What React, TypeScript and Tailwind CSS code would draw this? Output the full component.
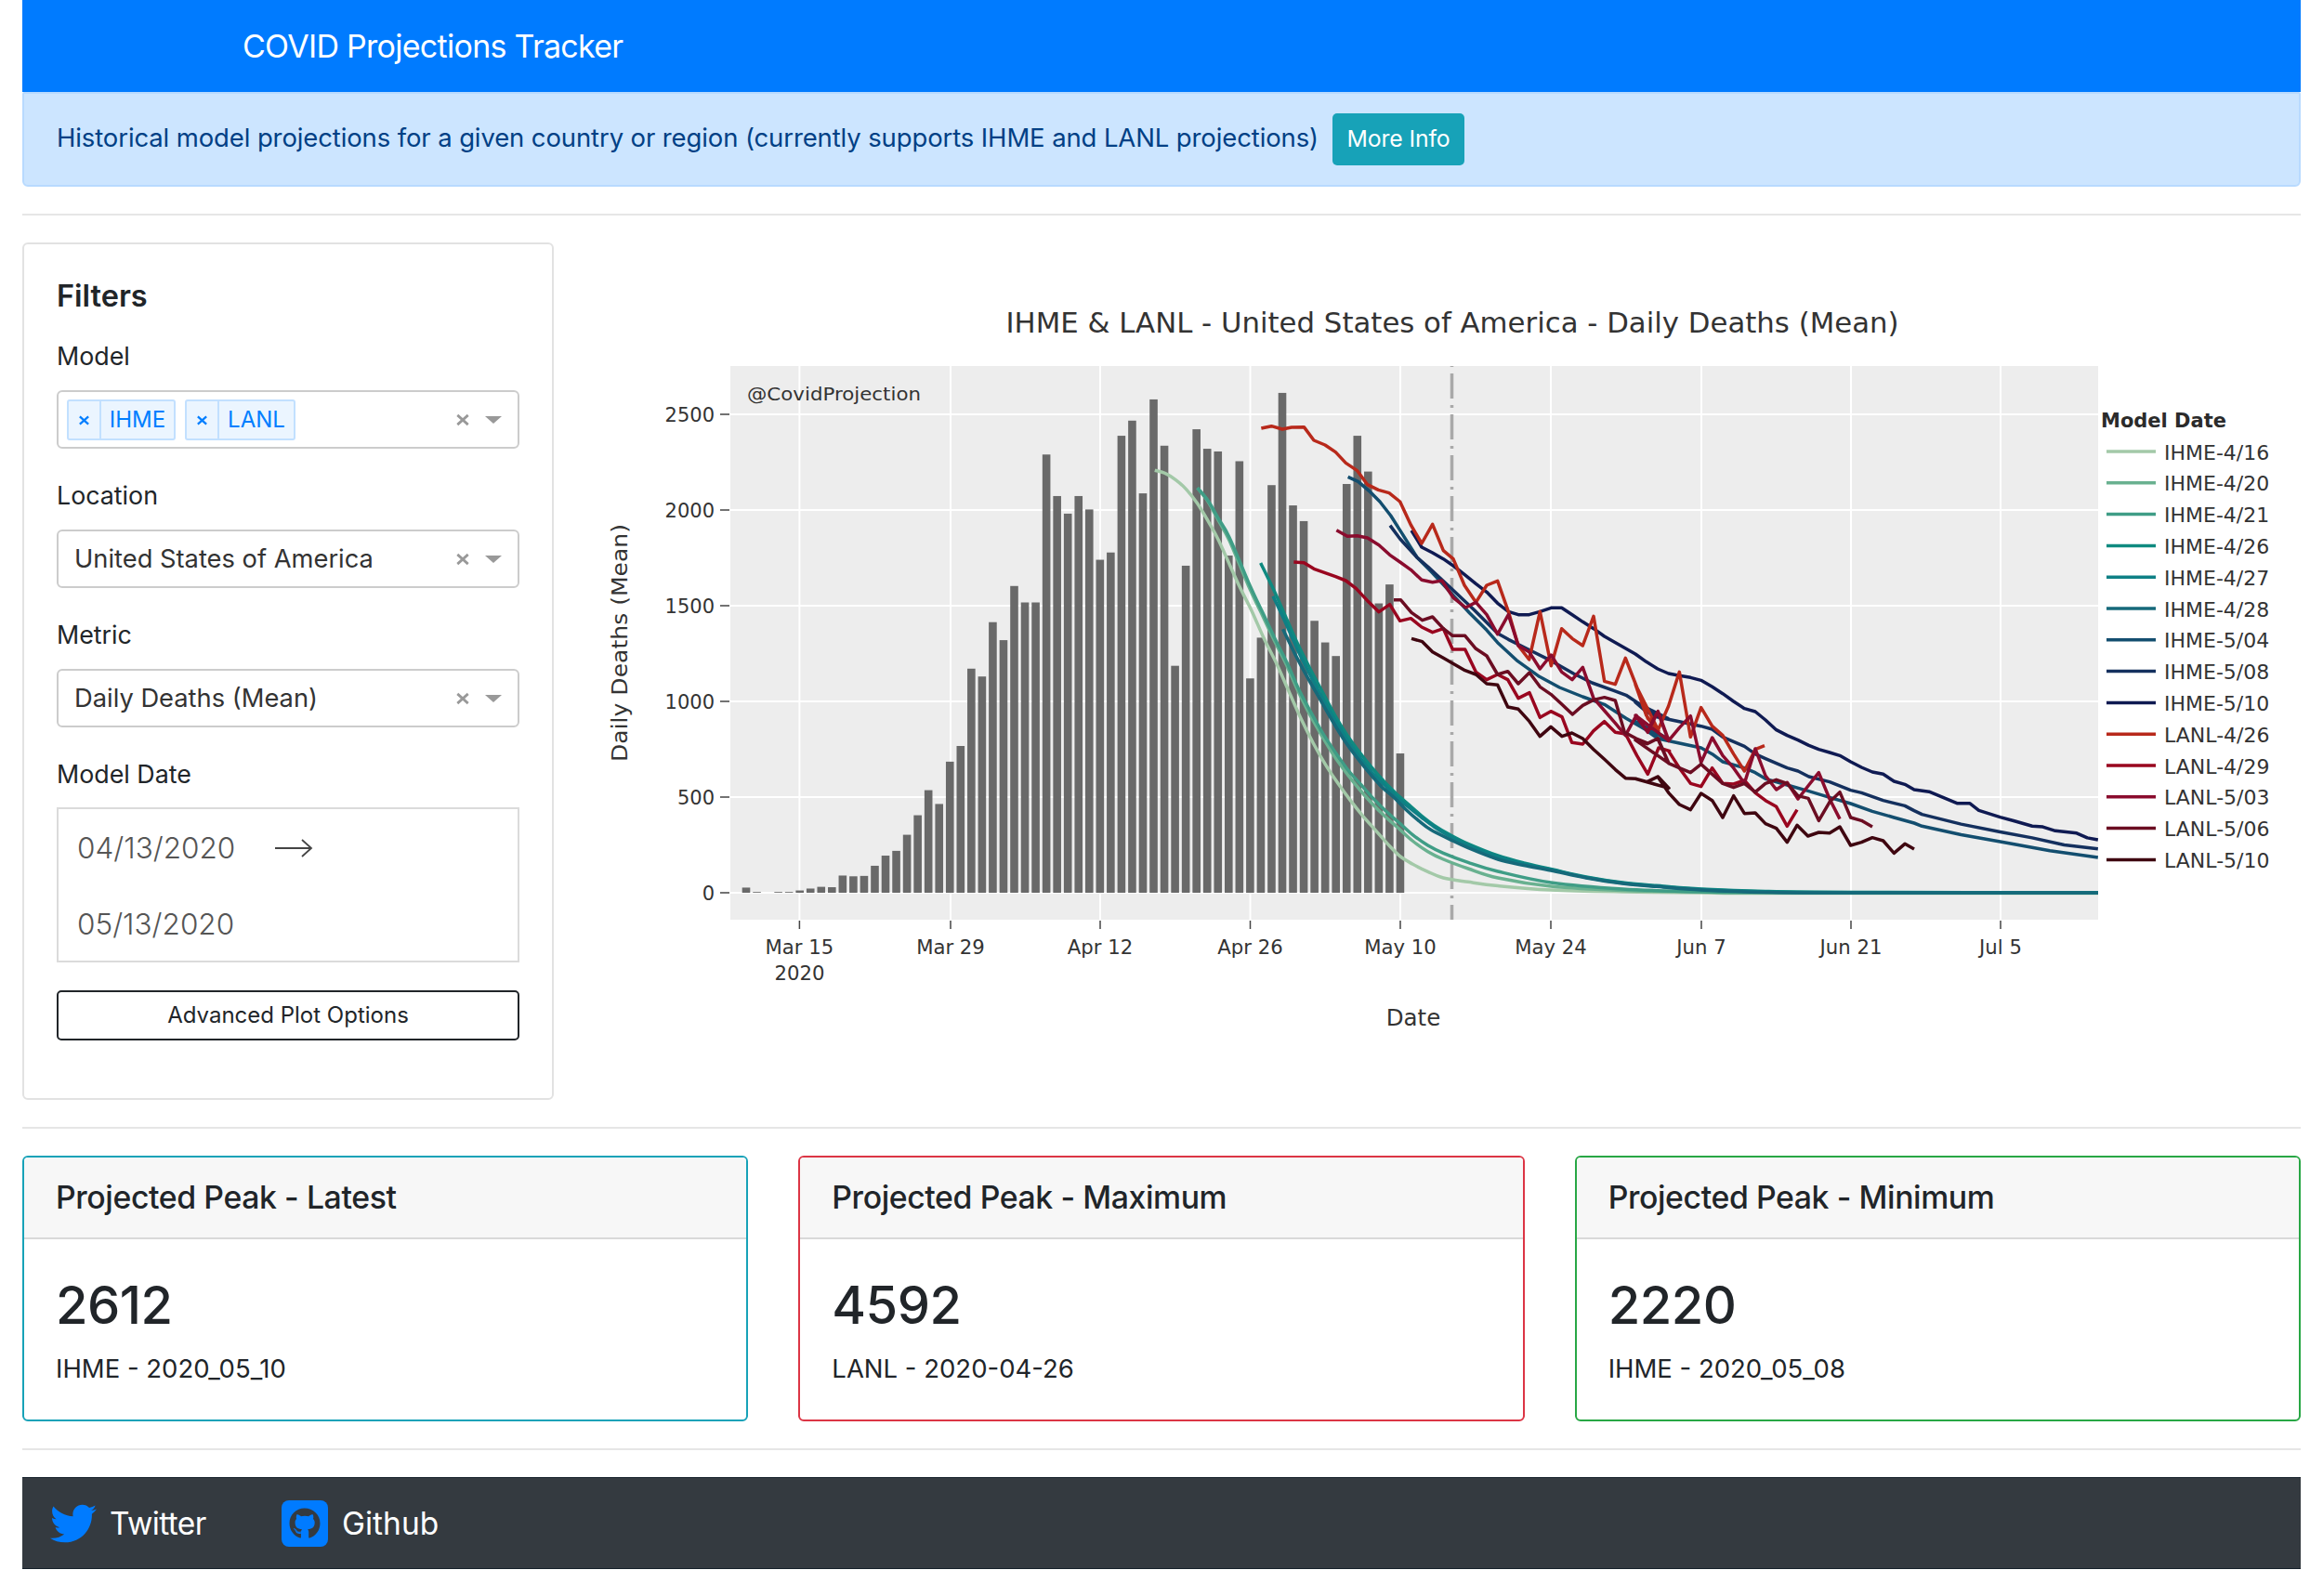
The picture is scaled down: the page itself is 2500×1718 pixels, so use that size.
import React from "react";
import { FaTwitter, FaGithub } from "react-icons/fa";

type P = number[][];
const mk = (ox: number, oy: number, sx: number, sy: number) => (a: P): P => a.map(([x, y]) => [ox + x / sx, oy + y / sy]);
const z3 = mk(640, 380, 1.742, 2.376);
const z5 = mk(1900, 380, 2.613, 2.376);
const z7 = mk(1340, 400, 3, 3);
const z8 = mk(1500, 600, 3, 3);
const z9 = mk(1760, 680, 3, 3);
const z10 = mk(1220, 600, 3, 3);

const bars = [27,4,0,4,4,12,22,31,29,90,86,88,141,194,219,303,405,536,464,685,767,1171,1130,1414,1320,1603,1517,1517,2290,2073,1981,2073,2003,1740,1778,2388,2467,2087,2578,2336,1186,1709,2422,2320,2306,1762,2255,1120,1333,2130,2612,2024,1942,1421,1308,1237,2136,2388,2201,1512,1611,728];

const series: { name: string; color: string; smooth?: boolean; pts: P }[] = [
  { name: "IHME-4/16", color: "#a3c9a8", smooth: true, pts: [...z3([[1050,300],[1070,308],[1090,325],[1110,350],[1130,385],[1150,430],[1170,480]]), ...z10([[340,90],[380,170],[420,260],[460,340],[500,430],[540,520],[580,600],[620,670],[660,730],[700,785],[740,835],[780,880],[820,925],[860,965],[900,990],[950,1015],[1000,1035],[1080,1048]]), [1612,953.5],[1669,958],[1746,960],[1831,961],[1900,961.5],[2258,961.5]] },
  { name: "IHME-4/20", color: "#69b190", smooth: true, pts: [...z3([[1130,345],[1150,380],[1170,430],[1190,480]]), ...z10([[370,90],[410,175],[450,260],[490,340],[530,430],[570,510],[610,580],[650,645],[690,700],[730,750],[770,795],[810,835],[850,870],[900,915],[950,950],[1000,975],[1080,1005]]), [1612,945],[1669,954],[1746,958.5],[1831,960],[1900,961],[2258,961]] },
  { name: "IHME-4/21", color: "#3f9d86", smooth: true, pts: [...z3([[1130,345],[1150,378],[1170,425],[1190,472]]), ...z10([[375,90],[415,175],[455,260],[495,340],[535,430],[575,505],[615,575],[655,635],[695,690],[735,735],[775,780],[815,820],[855,855],[900,895],[950,930],[1000,955],[1080,985]]), [1612,938],[1669,950],[1746,957],[1831,960],[1900,960.5],[2258,961]] },
  { name: "IHME-4/26", color: "#0f8a80", smooth: true, pts: [...z10([[410,18],[450,100],[490,190],[530,280],[570,360],[610,435],[650,510],[690,575],[730,630],[770,680],[810,725],[850,765],[890,800],[930,835],[970,865],[1020,895],[1080,925]]), [1612,921],[1640,929],[1669,935.5],[1707,944],[1746,950],[1790,954],[1831,957],[1900,959.5],[1992,960.5],[2258,961]] },
  { name: "IHME-4/27", color: "#0e8085", smooth: true, pts: [...z10([[450,125],[490,210],[530,300],[570,380],[610,455],[650,525],[690,590],[730,645],[770,695],[810,735],[850,775],[890,808],[930,840],[970,870],[1020,900],[1080,930]]), [1612,922],[1640,930],[1669,936],[1707,944.5],[1746,950.5],[1790,954.5],[1831,957.5],[1900,960],[1992,961],[2258,961]] },
  { name: "IHME-4/28", color: "#16697a", smooth: true, pts: [...z10([[482,232],[520,310],[560,385],[600,455],[640,525],[680,590],[720,645],[760,695],[800,740],[840,775],[880,815],[920,850],[960,880],[1020,910],[1080,938]]), [1612,925],[1640,931.5],[1669,937],[1707,945],[1746,951],[1790,955],[1831,958],[1900,960.5],[1992,961],[2258,961]] },
  { name: "IHME-5/04", color: "#134e6f", pts: [...z7([[332,340],[365,355],[400,385],[435,420],[470,465],[505,520],[555,600]]), ...z8([[120,45],[185,115],[245,180],[300,235],[335,275],[400,335],[470,385],[535,420],[610,450],[680,475],[750,520],[820,560],[885,585]]), ...z9([[0,290],[35,318],[72,345],[142,360],[212,375],[248,395],[282,420],[352,440],[387,455],[420,475],[490,495],[560,515],[627,535],[695,555],[765,580],[835,600],[900,618]]), ...z5([[440,1210],[550,1232],[660,1250],[800,1273],[935,1290]])] },
  { name: "IHME-5/08", color: "#14305e", pts: [...z7([[468,497],[500,540],[555,600]]), ...z8([[110,30],[185,100],[260,170],[335,245],[370,265],[440,300],[510,335],[580,375],[640,405],[710,430],[750,445],[785,468],[850,505],[885,520]]), ...z9([[0,228],[35,258],[70,275],[142,290],[212,305],[248,315],[282,340],[352,370],[387,395],[420,410],[490,440],[525,450],[560,468],[627,485],[695,512],[730,520],[800,545],[870,562],[900,578]]), ...z5([[440,1180],[550,1205],[660,1225],[750,1240],[840,1258],[935,1268]])] },
  { name: "IHME-5/10", color: "#0f1a52", pts: [...z7([[537,513],[570,567],[605,585],[640,605],[672,627],[708,655],[745,685],[780,712],[815,748],[850,775],[882,785],[917,785],[952,775],[988,763],[1022,763],[1056,785],[1090,808],[1125,830],[1160,855]]), ...z9([[0,72],[35,97],[72,120],[107,135],[142,142],[178,148],[212,157],[248,178],[282,200],[317,225],[352,248],[387,258],[420,285],[455,317],[490,335],[525,350],[560,367],[592,380],[627,390],[660,400],[695,420],[730,438],[765,453],[800,460],[835,483],[870,493],[900,510]]), ...z5([[460,1122],[540,1152],[575,1152],[600,1170],[660,1187],[700,1197],[750,1210],[780,1212],[815,1222],[875,1228],[905,1240],[935,1245]])] },
  { name: "LANL-4/26", color: "#b8291b", pts: [...z7([[52,183],[85,176],[120,186],[150,180],[190,179],[222,222],[258,237],[292,260],[325,295],[362,320],[395,365],[430,382],[465,392],[500,420],[535,495],[570,555],[605,493],[640,578],[672,605],[708,690],[745,745],[780,690],[815,676],[850,775],[882,885],[917,930],[952,775],[988,950],[1022,830],[1056,862],[1090,885],[1125,790],[1160,1000],[1195,1010]]), ...z8([[748,325],[785,420],[820,520],[855,560]]), ...z9([[0,170],[35,270],[72,320],[107,240],[142,130],[178,340],[212,245],[248,305],[282,335],[317,395],[352,450],[387,380],[417,368]])] },
  { name: "LANL-4/29", color: "#99061f", pts: [...z7([[157,615],[190,617],[222,637],[258,650],[292,662],[325,675],[358,700],[395,740],[432,776],[467,752],[500,805],[535,797],[570,825],[605,842],[640,830]]), ...z8([[190,297],[230,297],[265,370],[300,395],[335,378],[368,395],[402,455],[438,437],[472,517],[507,497],[543,515],[575,598],[610,603],[645,560],[680,530],[715,565],[748,570],[785,640],[820,700],[855,615],[890,625]]), ...z9([[107,385],[142,440],[178,490],[212,500],[248,440],[282,490],[317,492],[352,480],[387,520],[420,545],[455,565],[490,628],[522,575]])] },
  { name: "LANL-5/03", color: "#8a0c2e", pts: [...z7([[295,512],[330,532],[362,530],[395,537],[432,560],[467,592],[500,615],[535,640],[570,673],[605,680],[635,675],[672,730],[712,762],[745,745],[780,785],[815,848],[850,785],[882,885],[917,905],[952,960],[988,915],[1022,970],[1056,995],[1090,955]]), ...z8([[645,455],[680,495],[715,535],[748,575],[783,510],[820,565],[853,497],[888,592]]), ...z9([[0,270],[38,322],[72,258],[107,352],[142,310],[178,272],[212,422],[248,342],[282,400],[317,440],[352,490],[387,378],[420,465],[455,510],[490,487],[525,540],[560,495],[592,455],[627,540],[660,605]])] },
  { name: "LANL-5/06", color: "#6b0d22", pts: [...z8([[0,137],[22,137],[57,178],[92,203],[125,192],[160,230],[190,253],[230,253],[265,295],[300,318],[335,378],[368,368],[402,408],[438,372],[472,418],[507,442],[543,475],[577,507],[610,478],[645,460],[680,452],[715,462],[745,565],[783,585],[820,600],[853,585],[888,665]]), ...z9([[0,350],[38,362],[72,345],[107,425],[142,440],[178,455],[212,428],[248,460],[282,490],[317,503],[352,490],[387,518],[420,490],[455,478],[490,490],[525,530],[558,538],[592,610],[627,550],[660,518],[695,600],[730,610],[765,630]])] },
  { name: "LANL-5/10", color: "#3f0610", pts: [...z8([[57,262],[92,272],[125,305],[160,325],[195,345],[230,365],[265,378],[300,408],[335,412],[368,483],[402,490],[438,530],[472,578],[507,547],[543,578],[575,567],[610,585],[645,620],[680,652],[715,685],[748,713],[783,715],[818,725],[853,708],[888,745]]), ...z9([[0,475],[38,485],[72,468],[107,520],[142,558],[178,575],[212,522],[248,545],[282,600],[317,530],[352,587],[387,585],[420,620],[455,635],[490,680],[522,625],[557,660],[592,648],[627,650],[660,630],[695,690],[730,680],[765,665],[800,675],[835,715],[870,685],[900,702]])] },
];

const toPath = (p: P, smooth?: boolean) => {
  if (!smooth) return "M" + p.map((q) => q.join(" ")).join("L");
  let d = `M${p[0][0]} ${p[0][1]}`;
  for (let i = 0; i < p.length - 1; i++) {
    const a = p[Math.max(0, i - 1)], b = p[i], c = p[i + 1], e = p[Math.min(p.length - 1, i + 2)];
    d += `C${b[0] + (c[0] - a[0]) / 6} ${b[1] + (c[1] - a[1]) / 6} ${c[0] - (e[0] - b[0]) / 6} ${c[1] - (e[1] - b[1]) / 6} ${c[0]} ${c[1]}`;
  }
  return d;
};

const xTicks = [
  { x: 860.4, l: "Mar 15" }, { x: 1023, l: "Mar 29" }, { x: 1184, l: "Apr 12" }, { x: 1345.5, l: "Apr 26" },
  { x: 1507, l: "May 10" }, { x: 1669, l: "May 24" }, { x: 1831, l: "Jun 7" }, { x: 1992, l: "Jun 21" }, { x: 2153, l: "Jul 5" },
];
const yTicks = [0, 500, 1000, 1500, 2000, 2500];
const yOf = (v: number) => 961 - v * 0.206;
const plotFont = "'DejaVu Sans', Verdana, sans-serif";

function Chart() {
  return (
    <svg viewBox="620 261 1856 923" className="w-[1856px] h-[923px] block" style={{ fontFamily: plotFont }}>
      <rect x="786" y="394" width="1472" height="596" fill="#ededed" />
      {yTicks.map((v) => <line key={v} x1="786" x2="2258" y1={yOf(v)} y2={yOf(v)} stroke="#fff" strokeWidth="2" />)}
      {xTicks.map((t) => <line key={t.l} x1={t.x} x2={t.x} y1="394" y2="990" stroke="#fff" strokeWidth="2" />)}
      {yTicks.map((v) => <g key={v}>
        <line x1="775" x2="785" y1={yOf(v)} y2={yOf(v)} stroke="#444" strokeWidth="1.5" />
        <text x="769" y={yOf(v) + 7.5} textAnchor="end" fontSize="21" fill="#333">{v}</text>
      </g>)}
      {xTicks.map((t) => <g key={t.l}>
        <line x1={t.x} x2={t.x} y1="991" y2="1000" stroke="#444" strokeWidth="1.5" />
        <text x={t.x} y="1027" textAnchor="middle" fontSize="21.2" fill="#333">{t.l}</text>
      </g>)}
      <text x="860.4" y="1055" textAnchor="middle" fontSize="21.2" fill="#333">2020</text>
      <text x="1521" y="1104" textAnchor="middle" fontSize="24.5" fill="#333">Date</text>
      <text x="1563" y="358" textAnchor="middle" fontSize="30" fill="#333" textLength="961" lengthAdjust="spacingAndGlyphs">IHME &amp; LANL - United States of America - Daily Deaths (Mean)</text>
      <text transform="translate(675 692) rotate(-90)" textAnchor="middle" fontSize="23" fill="#333" textLength="256" lengthAdjust="spacingAndGlyphs">Daily Deaths (Mean)</text>
      <text x="804" y="431" fontSize="19.5" fill="#333" textLength="187" lengthAdjust="spacingAndGlyphs">@CovidProjection</text>
      {bars.map((v, i) => <rect key={i} x={803 + i * 11.54 - 4.3} y={yOf(v)} width="8.6" height={v * 0.206} fill="#696969" />)}
      <line x1="1562.5" x2="1562.5" y1="394" y2="990" stroke="#a9a9a9" strokeWidth="3.5" strokeDasharray="27 7 3 7" strokeDashoffset="36" />
      {series.map((s) => <path key={s.name} d={toPath(s.pts, s.smooth)} fill="none" stroke={s.color} strokeWidth="3.5" strokeLinejoin="round" />)}
      <text x="2261" y="460" fontSize="21" fontWeight="700" fill="#2b2b2b">Model Date</text>
      {series.map((s, i) => <g key={s.name}>
        <line x1="2267" x2="2320" y1={486 + i * 33.8} y2={486 + i * 33.8} stroke={s.color} strokeWidth="3.5" />
        <text x="2329" y={494.5 + i * 33.8} fontSize="22" fill="#333">{s.name}</text>
      </g>)}
    </svg>
  );
}

function Cross({ color = "#999", size = 16 }: { color?: string; size?: number }) {
  return (
    <svg width={size} height={size} viewBox="0 0 14 14" className="shrink-0">
      <path d="M2 2.5 12 11.5M12 2.5 2 11.5" stroke={color} strokeWidth="2.4" />
    </svg>
  );
}

function SelectEnd() {
  return (
    <div className="flex items-center ml-auto gap-[16px] pr-[17px]">
      <Cross />
      <span className="block w-0 h-0 border-x-[9px] border-x-transparent border-t-[8px] border-t-[#999]" />
    </div>
  );
}

function Chip({ label, w }: { label: string; w: string }) {
  return (
    <div className={`flex items-stretch h-[44px] border-2 border-[#c2e0ff] bg-[#ebf5ff] rounded-[3px] text-[#007eff] text-[24px] ${w}`}>
      <span className="w-[35px] flex items-center justify-center border-r-2 border-[#c2e0ff]"><Cross color="#007eff" size={13} /></span>
      <span className="flex-1 flex items-center justify-center">{label}</span>
    </div>
  );
}

function Field({ label, children }: { label: string; children: React.ReactNode }) {
  return (
    <div className="mb-[31px]">
      <div className="h-[38px] leading-[38px] text-[26.8px] text-[#212529] mb-[18px]">{label}</div>
      {children}
    </div>
  );
}

function SelectBox({ children }: { children: React.ReactNode }) {
  return <div className="h-[63px] border-2 border-[#ccc] rounded-[6px] flex items-center">{children}</div>;
}

function Stat({ title, value, sub, border }: { title: string; value: string; sub: string; border: string }) {
  return (
    <div className={`flex-1 h-[286px] border-2 rounded-[6px] overflow-hidden ${border}`}>
      <div className="h-[88px] bg-[#f7f7f7] border-b-2 border-[#d9d9d9] px-[34px] flex items-center text-[33.8px] font-medium text-[#212529] tracking-[-0.4px]">{title}</div>
      <div className="px-[34px] pt-[37.5px]">
        <div className="h-[66px] leading-[66px] text-[56px] font-medium text-[#212529] tracking-[-0.5px]">{value}</div>
        <div className="mt-[15.5px] h-[40px] leading-[40px] text-[27.5px] text-[#212529]">{sub}</div>
      </div>
    </div>
  );
}

const Rule = () => <div className="h-[2px] bg-[#e6e6e6] mt-[29px]" />;

export default function App() {
  return (
    <div className="w-[2500px] h-[1718px] bg-white px-[24px] flex flex-col font-['Inter',sans-serif]">
      <header className="h-[99px] shrink-0 bg-[#007bff] pl-[237px] flex items-center text-white text-[34px] tracking-[-0.72px]">COVID Projections Tracker</header>
      <div className="h-[102px] shrink-0 bg-[#cce5ff] border-2 border-[#b8daff] rounded-b-[6px] rounded-t-[2px] pl-[35px] flex items-center text-[#004085] text-[27.5px] tracking-[-0.12px]">
        <span className="pb-[2px]">Historical model projections for a given country or region (currently supports IHME and LANL projections)</span>
        <span className="ml-[15px] w-[142px] h-[56px] bg-[#17a2b8] rounded-[5px] text-white text-[24.8px] flex items-center justify-center">More Info</span>
      </div>
      <Rule />
      <div className="flex mt-[29px] shrink-0">
        <aside className="w-[572px] h-[923px] border-2 border-[#e2e2e2] rounded-[6px] pt-[38px] px-[35px]">
          <div className="h-[36px] leading-[36px] text-[32.5px] font-semibold text-[#212529] mb-[27px]">Filters</div>
          <Field label="Model">
            <SelectBox>
              <div className="flex gap-[10px] pl-[9px] pt-[1px]">
                <Chip label="IHME" w="w-[117px]" />
                <Chip label="LANL" w="w-[119px]" />
              </div>
              <SelectEnd />
            </SelectBox>
          </Field>
          <Field label="Location">
            <SelectBox><span className="pl-[17px] pt-[2px] text-[27.3px] text-[#333]">United States of America</span><SelectEnd /></SelectBox>
          </Field>
          <Field label="Metric">
            <SelectBox><span className="pl-[17px] pt-[2px] text-[27.3px] text-[#333]">Daily Deaths (Mean)</span><SelectEnd /></SelectBox>
          </Field>
          <div>
            <div className="h-[38px] leading-[38px] text-[26.8px] text-[#212529] mb-[17px]">Model Date</div>
            <div className="h-[167px] border-2 border-[#dbdbdb] flex flex-col pl-[20px] pt-[22px] text-[31.5px] font-light text-[#555]">
              <div className="h-[40px] flex items-center">
                <span className="w-[168px]">04/13/2020</span>
                <svg width="42" height="22" viewBox="0 0 42 22" className="ml-[44px]"><path d="M1 11H40M30 2l10 9-10 9" fill="none" stroke="#444" strokeWidth="1.8" /></svg>
              </div>
              <div className="h-[40px] flex items-center mt-[42px]">05/13/2020</div>
            </div>
          </div>
          <div className="mt-[30px] h-[54px] border-2 border-[#212529] rounded-[5px] flex items-center justify-center text-[24px] text-[#212529]">Advanced Plot Options</div>
        </aside>
        <div className="ml-[24px]"><Chart /></div>
      </div>
      <Rule />
      <div className="flex gap-[54px] mt-[29px] shrink-0">
        <Stat title="Projected Peak - Latest" value="2612" sub="IHME - 2020_05_10" border="border-[#17a2b8]" />
        <Stat title="Projected Peak - Maximum" value="4592" sub="LANL - 2020-04-26" border="border-[#dc3545]" />
        <Stat title="Projected Peak - Minimum" value="2220" sub="IHME - 2020_05_08" border="border-[#28a745]" />
      </div>
      <Rule />
      <footer className="mt-[29px] h-[99px] shrink-0 bg-[#343a40] border-y border-[#14202a] flex items-center pl-[30px] text-white text-[33.5px]">
        <FaTwitter className="text-[#007bff] w-[50px] h-[50px]" />
        <span className="ml-[14px] pt-[2px] w-[103px] tracking-[-0.6px]">Twitter</span>
        <span className="ml-[82px] w-[50px] h-[50px] bg-[#007bff] rounded-[8px] flex items-center justify-center">
          <FaGithub className="text-[#343a40] w-[34px] h-[34px]" />
        </span>
        <span className="ml-[15px] pt-[2px]">Github</span>
      </footer>
    </div>
  );
}
